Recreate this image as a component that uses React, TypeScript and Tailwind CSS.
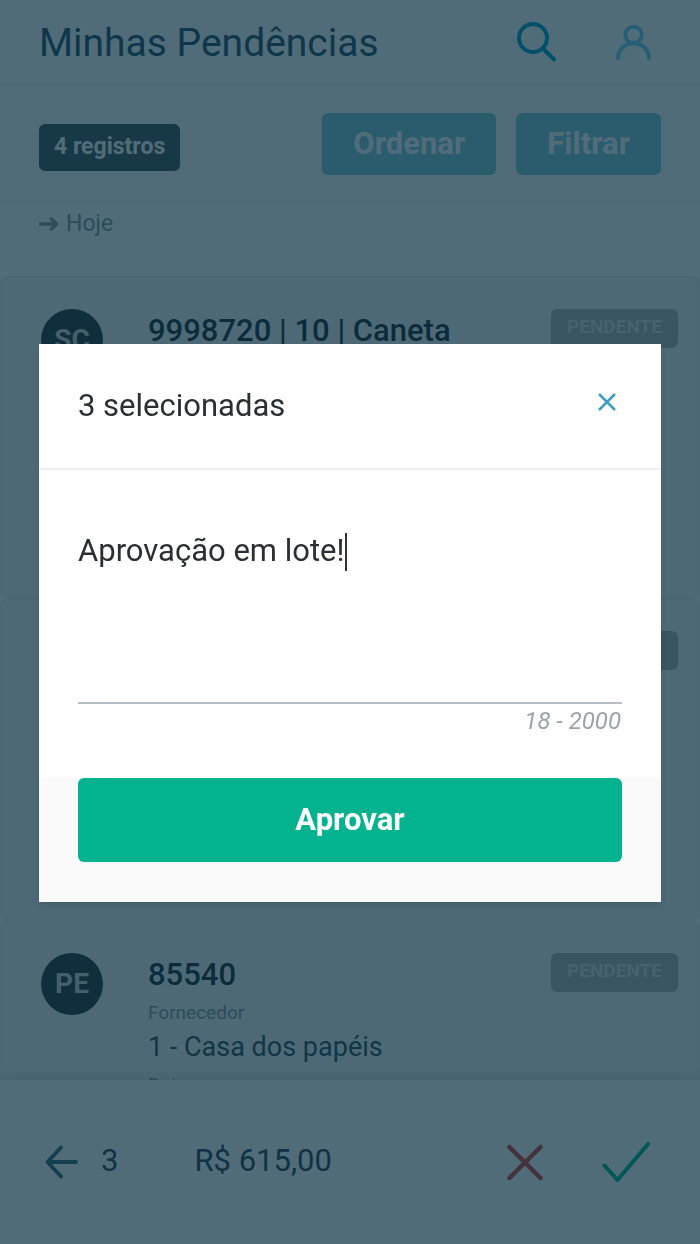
import { useState } from "react";

type Field = {
  label: string;
  value: string;
};

type RecordItem = {
  id: number;
  initials?: string;
  title?: string;
  fields: Field[];
};

const records: RecordItem[] = [
  { id: 1, initials: "SC", title: "9998720 | 10 | Caneta", fields: [] },
  { id: 2, fields: [] },
  {
    id: 3,
    initials: "PE",
    title: "85540",
    fields: [
      { label: "Fornecedor", value: "1 - Casa dos papéis" },
      { label: "Data", value: "" },
    ],
  },
];

const MAX_LENGTH = 2000;

const PageHeader = () => (
  <header className="flex h-[85px] shrink-0 items-center justify-between border-b border-[#f5f5f5] bg-white px-[39px]">
    <h1 className="pt-0.5 text-[39px] leading-none text-[#2f5268]">
      Minhas Pendências
    </h1>
    <div className="flex items-center gap-[54px]">
      <button type="button" aria-label="Pesquisar" className="text-[#00a5cc]">
        <svg
          className="h-[46px] w-[45px]"
          viewBox="0 0 45 46"
          fill="none"
          stroke="currentColor"
          strokeWidth="4"
          strokeLinecap="round"
        >
          <circle cx="17" cy="19" r="14" />
          <path d="M27.500 30 38 40.500" />
        </svg>
      </button>
      <button type="button" aria-label="Perfil" className="text-[#7fd0ea]">
        <svg
          className="size-[46px]"
          viewBox="0 0 46 46"
          fill="none"
          stroke="currentColor"
          strokeWidth="4"
        >
          <circle cx="18.500" cy="16" r="8.200" />
          <path d="M3 40.500v-1C3 31 9.500 24.300 18.500 24.300S34 31 34 39.500v1" />
        </svg>
      </button>
    </div>
  </header>
);

const Toolbar = () => (
  <div className="flex h-[118px] shrink-0 items-center justify-between border-b border-[#f5f5f5] bg-[#fbfbfb] px-[39px]">
    <span className="mt-2 flex h-[47px] items-center rounded-md bg-[#47575a] px-[15px] text-[23px] font-bold text-white">
      4 registros
    </span>
    <div className="flex gap-5">
      <button
        type="button"
        className="h-[62px] rounded-md bg-[#85cbdb] px-[31px] text-[31px] leading-none font-bold text-white"
      >
        Ordenar
      </button>
      <button
        type="button"
        className="h-[62px] rounded-md bg-[#85cbdb] px-[31px] text-[31px] leading-none font-bold text-white"
      >
        Filtrar
      </button>
    </div>
  </div>
);

const RecordCard = ({ record }: { record: RecordItem }) => (
  <li className="flex h-[322px] shrink-0 items-start rounded-lg border-2 border-[#efefef] bg-[#f6f6f4] pt-[31px] pr-5 pl-[39px]">
    {record.initials && (
      <span className="mr-[45px] flex size-[62px] shrink-0 items-center justify-center rounded-full bg-[#2f3a3f] text-[28px] font-bold text-[#d5d5d5]">
        {record.initials}
      </span>
    )}
    <div className="min-w-0 flex-1">
      {record.title && (
        <h2 className="mt-1 text-[31px] leading-9 font-medium text-[#20303a]">
          {record.title}
        </h2>
      )}
      <dl>
        {record.fields.map((field) => (
          <div key={field.label} className="pt-1">
            <dt className="text-[19px] leading-8 text-[#8f9a9f]">
              {field.label}
            </dt>
            <dd className="text-[27px] leading-9 text-[#33525c]">
              {field.value}
            </dd>
          </div>
        ))}
      </dl>
    </div>
    <span className="flex h-[39px] items-center rounded-md bg-[#b3b5b2] px-4 pb-0.5 text-[19px] font-bold text-[#dedede]">
      PENDENTE
    </span>
  </li>
);

const SelectionBar = () => (
  <footer className="relative flex h-[164px] shrink-0 items-center bg-white pr-11 pl-[39px] text-[31px] text-[#2d4856] shadow-[0_-2px_16px_rgba(0,0,0,0.12)]">
    <button type="button" aria-label="Voltar" className="text-[#3f6d78]">
      <svg
        className="size-[46px]"
        viewBox="0 0 46 46"
        fill="none"
        stroke="currentColor"
        strokeWidth="4"
        strokeLinecap="round"
        strokeLinejoin="round"
      >
        <path d="M37 23H9M22 8.500 8.500 23 22 37.500" />
      </svg>
    </button>
    <span className="ml-4 pb-0.5">3</span>
    <span className="ml-[76px] pb-0.5">R$ 615,00</span>
    <div className="ml-auto flex items-center gap-[54px]">
      <button type="button" aria-label="Reprovar" className="text-[#d9453f]">
        <svg
          className="size-[46px]"
          viewBox="0 0 46 46"
          fill="none"
          stroke="currentColor"
          strokeWidth="4.500"
          strokeLinecap="round"
        >
          <path d="m7.500 8 31 31M38.500 8l-31 31" />
        </svg>
      </button>
      <button type="button" aria-label="Aprovar seleção" className="text-[#00b890]">
        <svg
          className="h-[46px] w-[54px]"
          viewBox="0 0 54 46"
          fill="none"
          stroke="currentColor"
          strokeWidth="4"
          strokeLinecap="round"
          strokeLinejoin="round"
        >
          <path d="M2.500 26.500 15.500 41 46 5" />
        </svg>
      </button>
    </div>
  </footer>
);

const ApprovalDialog = () => {
  const [comment, setComment] = useState("Aprovação em lote!");

  return (
    <div className="fixed inset-0 flex items-center justify-center bg-[#012a3d]/69 px-[39px] pt-0.5">
      <div
        role="dialog"
        aria-modal="true"
        aria-labelledby="dialog-title"
        className="w-full bg-white shadow-md"
      >
        <div className="flex items-center justify-between border-b-2 border-[#efefef] px-[39px] pt-[42px] pb-[42px]">
          <h2 id="dialog-title" className="text-[31px] leading-10 text-[#2b2f33]">
            3 selecionadas
          </h2>
          <button type="button" aria-label="Fechar" className="mb-2 text-[#3f9cc4]">
            <svg
              className="size-[30px]"
              viewBox="0 0 30 30"
              fill="none"
              stroke="currentColor"
              strokeWidth="2.500"
            >
              <path d="m7 7 16 16M23 7 7 23" />
            </svg>
          </button>
        </div>

        <div className="px-[39px] pt-[61px] pb-10">
          <div className="relative">
            <textarea
              aria-label="Comentário"
              value={comment}
              maxLength={MAX_LENGTH}
              onChange={(e) => setComment(e.target.value)}
              className="block h-[173px] w-full resize-none border-b-2 border-[#b5bfc1] text-[31px] leading-10 text-[#2b2f33] caret-transparent outline-none"
            />
            {/* cursor */}
            <span className="absolute top-0.5 left-[267px] h-[38px] w-0.5 bg-[#333]" />
          </div>
          <p className="pr-px text-right text-2xl leading-[34px] text-[#9aa5aa] italic">
            {comment.length} - {MAX_LENGTH}
          </p>
        </div>

        <div className="bg-[#fafafa] px-[39px] pb-10">
          <button
            type="button"
            className="h-[84px] w-full rounded-md bg-[#03b28e] text-[31px] font-bold text-white"
          >
            Aprovar
          </button>
        </div>
      </div>
    </div>
  );
};

export default function App() {
  return (
    <div className="flex h-screen flex-col overflow-hidden bg-white font-[Roboto,sans-serif]">
      <PageHeader />
      <Toolbar />
      <main className="flex min-h-0 flex-1 flex-col overflow-hidden">
        <h3 className="flex h-[73px] shrink-0 items-start gap-2 px-[39px] pt-[3px] text-[23px] leading-9 text-[#8b979b]">
          <svg
            className="mt-2 h-5 w-[19px]"
            viewBox="0 0 19 20"
            fill="none"
            stroke="currentColor"
            strokeWidth="3.500"
          >
            <path d="M0 10h17M11.500 4l6 6-6 6" />
          </svg>
          Hoje
        </h3>
        <ul className="flex flex-col">
          {records.map((record) => (
            <RecordCard key={record.id} record={record} />
          ))}
        </ul>
      </main>
      <SelectionBar />
      <ApprovalDialog />
    </div>
  );
}
